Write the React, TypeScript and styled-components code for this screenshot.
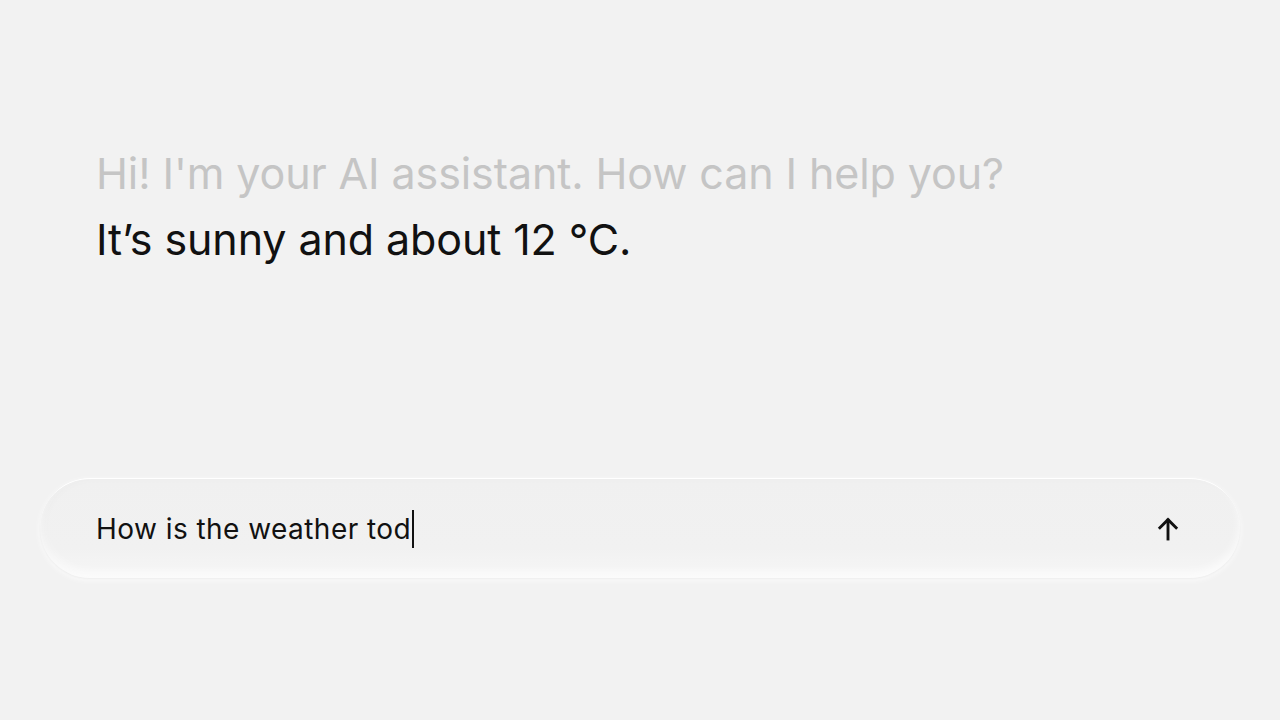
import React from 'react';
import styled, { createGlobalStyle } from 'styled-components';

const GlobalStyle = createGlobalStyle`
  html, body {
    margin: 0;
    padding: 0;
    background: #f2f2f2;
  }

  body {
    font-family: Inter, 'Noto Sans', sans-serif;
  }
`;

const Page = styled.main`
  display: flex;
  flex-direction: column;
  width: 1280px;
  height: 720px;
  box-sizing: border-box;
  padding: 140px 40px 0;
  background: #f2f2f2;
`;

const Messages = styled.section`
  display: flex;
  flex-direction: column;
  padding: 0 56px;
  height: 338px;
`;

const Message = styled.p<{ $muted?: boolean }>`
  margin: 0;
  font-size: 43px;
  line-height: 66px;
  font-weight: 400;
  letter-spacing: -0.1px;
  color: ${(props) => (props.$muted ? '#c5c5c5' : '#111111')};
`;

const Composer = styled.form`
  display: flex;
  align-items: center;
  justify-content: space-between;
  height: 100px;
  box-sizing: border-box;
  padding: 0 52px 0 56px;
  border-radius: 50px;
  border-top: 1px solid #ffffff;
  background: linear-gradient(180deg, #f0f0f0 0%, #f1f1f1 70%, #f6f6f6 100%);
  box-shadow:
    inset 0 -6px 10px rgba(255, 255, 255, 0.7),
    inset 4px 0 8px rgba(0, 0, 0, 0.02),
    0 1px 2px rgba(0, 0, 0, 0.05),
    0 2px 6px rgba(255, 255, 255, 0.8);
`;

const Draft = styled.span`
  display: flex;
  align-items: center;
  font-size: 28px;
  letter-spacing: 0.45px;
  color: #111111;
`;

const Caret = styled.span`
  display: inline-block;
  width: 2px;
  height: 38px;
  margin-left: 1px;
  background: #111111;
`;

const SendButton = styled.button`
  display: flex;
  align-items: center;
  justify-content: center;
  width: 40px;
  height: 40px;
  padding: 0;
  border: none;
  background: none;
  color: #111111;
  cursor: pointer;
`;

const ArrowUp: React.FC = function () {
  return (
    <svg width="30" height="30" viewBox="0 0 24 24" fill="none" stroke="currentColor" strokeWidth="2.3" strokeLinecap="square">
      <path d="M12 20V5" />
      <path d="M5.5 11L12 4.5L18.5 11" />
    </svg>
  );
};

const App: React.FC = function () {
  return (
    <>
      <GlobalStyle />
      <Page>
        <Messages>
          <Message $muted>Hi! I'm your AI assistant. How can I help you?</Message>
          <Message>It’s sunny and about 12 °C.</Message>
        </Messages>
        <Composer onSubmit={(e) => e.preventDefault()}>
          <Draft>
            How is the weather tod
            <Caret />
          </Draft>
          <SendButton type="submit" aria-label="Send">
            <ArrowUp />
          </SendButton>
        </Composer>
      </Page>
    </>
  );
};

export default App;
